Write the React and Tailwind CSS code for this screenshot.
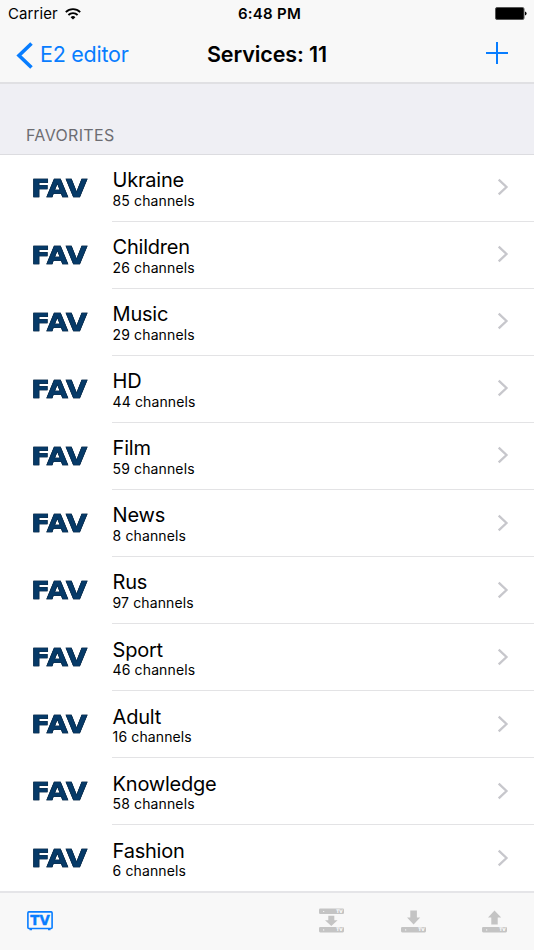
const channels = [
  ['Ukraine', 85],
  ['Children', 26],
  ['Music', 29],
  ['HD', 44],
  ['Film', 59],
  ['News', 8],
  ['Rus', 97],
  ['Sport', 46],
  ['Adult', 16],
  ['Knowledge', 58],
  ['Fashion', 6],
];

function WifiIcon() {
  return (
    <svg width="16" height="12" viewBox="0 0 16 12" fill="none" stroke="#000" strokeWidth="1.8">
      <path d="M.8 4.1a10.2 10.2 0 0 1 14.4 0" />
      <path d="M3.4 7a6.5 6.5 0 0 1 9.2 0" />
      <path d="M8 11.6 5.6 9.2a3.4 3.4 0 0 1 4.8 0z" fill="#000" stroke="none" />
    </svg>
  );
}

function BatteryIcon() {
  return (
    <svg width="32" height="13" viewBox="0 0 32 13">
      <rect x=".5" y=".5" width="28.5" height="12" rx="1.5" fill="#000" stroke="#555" />
      <path d="M30 4.4q1.6.6 1.6 2.1T30 8.6z" fill="#000" />
    </svg>
  );
}

function FavLogo() {
  return (
    <svg className="block overflow-visible" width="58" height="32" viewBox="0 0 58 32" fontFamily="'DejaVu Sans', sans-serif" fontWeight="700" fontSize="24.4">
      <text
        className="[filter:drop-shadow(0.2px_0.5px_0_#071a2c)]"
        x="-0.8"
        y="23.6"
        textLength="56"
        lengthAdjust="spacingAndGlyphs"
        fill="#063a68"
        stroke="#0a3358"
        strokeWidth="0.7"
      >
        FAV
      </text>
    </svg>
  );
}

function TvIcon() {
  return (
    <svg width="26" height="20" viewBox="0 0 26 20">
      <rect x=".9" y=".9" width="24.2" height="16.6" rx="1" fill="none" stroke="#087dff" strokeWidth="1.6" />
      <path d="M2.5 18h2.5v1.2H2.5zM21 18h2.5v1.2H21z" fill="#087dff" />
      <text x="3.3" y="13.8" textLength="19.4" lengthAdjust="spacingAndGlyphs" fontFamily="'DejaVu Sans', sans-serif" fontWeight="700" fontSize="13.4" fill="#087dff" stroke="#087dff" strokeWidth="0.4">TV</text>
    </svg>
  );
}

function Receiver({ y }) {
  return (
    <g>
      <rect x="0" y={y} width="25" height="5.4" rx="1.3" fill="#c4c4c4" />
      <circle cx="4.7" cy={y + 2.9} r=".6" fill="#fff" />
      <text x="17.2" y={y + 4.4} textLength="6.4" lengthAdjust="spacingAndGlyphs" fontFamily="'DejaVu Sans', sans-serif" fontWeight="700" fontSize="4.8" fill="#fff">TV</text>
    </g>
  );
}

function TransferIcon({ kind }) {
  return (
    <svg width="26" height="26" viewBox="0 0 26 26">
      {kind === 'both' && <Receiver y={0.6} />}
      {kind === 'both' && <path d="M9.3 7.8h6v4.4h3.3l-6.3 5.8L6 12.2h3.3z" fill="#c4c4c4" />}
      {kind === 'down' && <path d="M9.3 2.4h6.6v7h3.3l-6.6 7.2-6.6-7.2h3.3z" fill="#c4c4c4" />}
      {kind === 'up' && <path d="M9.3 16.6h6.4v-7h3.5l-6.7-7.2L6 9.6h3.3z" fill="#c4c4c4" />}
      <Receiver y={19} />
    </svg>
  );
}

function Row({ name, count, last }) {
  return (
    <li className="flex h-[67.06px] shrink-0 pl-8">
      <div className="w-20 shrink-0 pt-[18px]">
        <FavLogo />
      </div>
      <div className={'flex flex-1 justify-between border-b ' + (last ? 'border-transparent' : 'border-[#e3e3e5]')}>
        <div className="pt-[13.2px] pl-[0.6px]">
          <div className="text-[20px] leading-[25px] tracking-[-0.23px]">{name}</div>
          <div className="-mt-[0.5px] text-[14px] leading-[16px] tracking-[0.12px]">{count} channels</div>
        </div>
        <svg className="mt-[23.3px] mr-[25px]" width="12" height="18" viewBox="0 0 12 18" fill="none" stroke="#c7c7cc" strokeWidth="2.3">
          <path d="m1.7 1.6 7.8 7.4-7.8 7.4" />
        </svg>
      </div>
    </li>
  );
}

export default function App() {
  return (
    <div className="flex h-[950px] w-[534px] flex-col overflow-hidden bg-white font-['Inter',sans-serif] text-black">
      <header className="h-[84px] shrink-0 border-b-2 border-[#e0e0e3] bg-[#f8f8f8]">
        <div className="grid h-7 grid-cols-3 items-center">
          <div className="flex items-center gap-[7px] pl-2 text-[15px] leading-5">
            <span className="tracking-[0.08px]">Carrier</span>
            <WifiIcon />
          </div>
          <div className="pl-[5px] text-center text-[15px] font-semibold leading-5 tracking-[0.25px]">6:48 PM</div>
          <div className="flex justify-end pr-[7px] pb-px">
            <BatteryIcon />
          </div>
        </div>
        <div className="grid h-[54px] grid-cols-3 items-center">
          <div className="flex items-center gap-[7px] pl-4 text-[#087dff]">
            <svg width="17" height="27" viewBox="0 0 17 27" fill="none" stroke="currentColor" strokeWidth="3.6">
              <path d="M15.5 1.5 3 13.5l12.5 12" />
            </svg>
            <span className="whitespace-nowrap pb-0.5 text-[21.5px] leading-[26px] tracking-[-0.25px]">E2 editor</span>
          </div>
          <h1 className="whitespace-nowrap pb-0.5 text-center text-[21.5px] font-semibold leading-[26px] tracking-[-0.1px]">Services: 11</h1>
          <div className="flex justify-end pr-[26px] pb-1">
            <svg width="22" height="22" viewBox="0 0 22 22" stroke="#087dff" strokeWidth="2">
              <path d="M11 0v22M0 11h22" />
            </svg>
          </div>
        </div>
      </header>
      <main className="flex h-[807px] shrink-0 flex-col overflow-hidden">
        <h2 className="h-[71px] shrink-0 border-b border-[#dcdce0] bg-[#efeff4] pt-10 pl-[26px] text-[16px] leading-[22px] tracking-[0.35px] text-[#6d6d72]">FAVORITES</h2>
        <ul className="flex flex-col">
          {channels.map(([name, count], i) => (
            <Row key={name} name={name} count={count} last={i === channels.length - 1} />
          ))}
        </ul>
      </main>
      <footer className="flex h-[59px] shrink-0 items-start border-t-2 border-[#e5e5e8] bg-[#f8f8f8] pl-[27px]">
        <div className="mt-[18px] mr-[266px]"><TvIcon /></div>
        <div className="mt-[15px] flex gap-[55.5px]">
          <TransferIcon kind="both" />
          <TransferIcon kind="down" />
          <TransferIcon kind="up" />
        </div>
      </footer>
    </div>
  );
}
